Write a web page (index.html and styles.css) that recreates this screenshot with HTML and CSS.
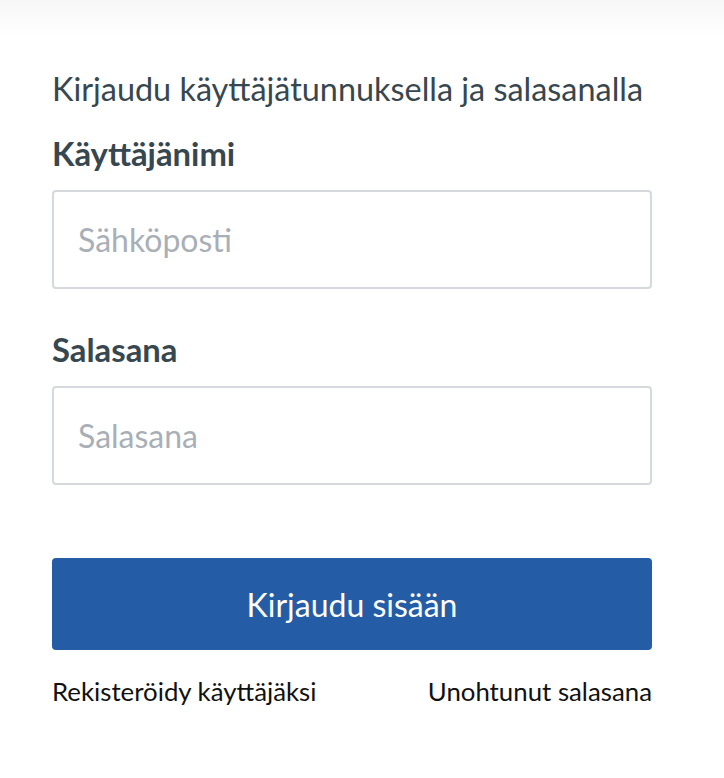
FILE: index.html
```html
<!DOCTYPE html>
<html lang="fi">
<head>
<meta charset="utf-8">
<title>Kirjaudu</title>
<link rel="stylesheet" href="styles.css">
</head>
<body>
<main class="login">
  <h2 class="intro">Kirjaudu käyttäjätunnuksella ja salasanalla</h2>
  <form class="form">
    <label class="label" for="user">Käyttäjänimi</label>
    <input class="input" id="user" type="text" placeholder="Sähköposti">
    <label class="label label-second" for="pass">Salasana</label>
    <input class="input" id="pass" type="password" placeholder="Salasana">
    <button class="submit" type="button">Kirjaudu sisään</button>
  </form>
  <div class="links">
    <a class="link" href="#">Rekisteröidy käyttäjäksi</a>
    <a class="link" href="#">Unohtunut salasana</a>
  </div>
</main>
</body>
</html>
```
FILE: styles.css
```css
html, body {
  margin: 0;
  padding: 0;
}
body {
  background: linear-gradient(#f7f7f7 0px, #ffffff 36px) no-repeat;
  background-color: #fff;
  font-family: Lato, "Open Sans", sans-serif;
  color: #37474f;
}
.login {
  width: 600px;
  margin-left: 52px;
  padding-top: 69px;
}
.intro {
  margin: 0;
  font-size: 32.4px;
  line-height: 40px;
  font-weight: 400;
  color: #37474f;
}
.form {
  display: flex;
  flex-direction: column;
}
.label {
  margin-top: 25px;
  font-size: 32.8px;
  line-height: 40px;
  font-weight: 700;
  color: #37474f;
}
.label-second {
  margin-top: 41px;
}
.input {
  margin-top: 16px;
  box-sizing: border-box;
  height: 99px;
  width: 600px;
  border: 2px solid #d5d8dc;
  border-radius: 4px;
  padding: 0 24px;
  font-family: Lato, sans-serif;
  font-size: 32px;
  color: #37474f;
  background: #fff;
  outline: none;
}
.input::placeholder {
  color: #a9afb6;
}
.submit {
  margin-top: 73px;
  height: 92px;
  width: 600px;
  border: none;
  border-radius: 4px;
  background: #255ca6;
  color: #fff;
  font-family: Lato, sans-serif;
  font-size: 32px;
  cursor: pointer;
}
.links {
  display: flex;
  justify-content: space-between;
  margin-top: 25px;
}
.link {
  font-size: 25.8px;
  line-height: 32px;
  color: #111;
  text-decoration: none;
}
```
